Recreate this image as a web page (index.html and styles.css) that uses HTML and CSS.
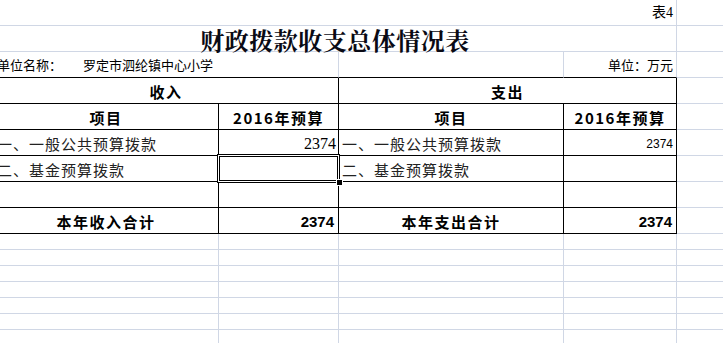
FILE: index.html
```html
<!DOCTYPE html>
<html lang="zh-CN">
<head>
<meta charset="utf-8">
<title>财政拨款收支总体情况表</title>
<link rel="stylesheet" href="styles.css">
</head>
<body>
<div class="sheet">
  <div class="cell span4 right no"><span>表4</span></div>
  <div class="cell"></div>

  <div class="cell span4 center title">财政拨款收支总体情况表</div>
  <div class="cell"></div>

  <div class="cell span2 bb unit"><span class="lbl">单位名称：</span><span>罗定市泗纶镇中心小学</span></div>
  <div class="cell bb"></div>
  <div class="cell bb right unit">单位：万元</div>
  <div class="cell"></div>

  <div class="cell span2 k center hd">收入</div>
  <div class="cell span2 k center hd">支出</div>
  <div class="cell"></div>

  <div class="cell k center hd">项目</div>
  <div class="cell k center hd">2016年预算</div>
  <div class="cell k center hd">项目</div>
  <div class="cell k center hd">2016年预算</div>
  <div class="cell"></div>

  <div class="cell k txt">一、一般公共预算拨款</div>
  <div class="cell k right num-serif">2374</div>
  <div class="cell k txt">一、一般公共预算拨款</div>
  <div class="cell k right num-sans">2374</div>
  <div class="cell"></div>

  <div class="cell k txt">二、基金预算拨款</div>
  <div class="cell k selected"><span class="sel"><span class="handle"></span></span></div>
  <div class="cell k txt">二、基金预算拨款</div>
  <div class="cell k"></div>
  <div class="cell"></div>

  <div class="cell k"></div>
  <div class="cell k"></div>
  <div class="cell k"></div>
  <div class="cell k"></div>
  <div class="cell"></div>

  <div class="cell k center hd">本年收入合计</div>
  <div class="cell k right num-bold">2374</div>
  <div class="cell k center hd">本年支出合计</div>
  <div class="cell k right num-bold">2374</div>
  <div class="cell"></div>

  <div class="cell"></div><div class="cell"></div><div class="cell"></div><div class="cell"></div><div class="cell"></div>
  <div class="cell"></div><div class="cell"></div><div class="cell"></div><div class="cell"></div><div class="cell"></div>
  <div class="cell"></div><div class="cell"></div><div class="cell"></div><div class="cell"></div><div class="cell"></div>
  <div class="cell"></div><div class="cell"></div><div class="cell"></div><div class="cell"></div><div class="cell"></div>
  <div class="cell"></div><div class="cell"></div><div class="cell"></div><div class="cell"></div><div class="cell"></div>
  <div class="cell"></div><div class="cell"></div><div class="cell"></div><div class="cell"></div><div class="cell"></div>
  <div class="cell"></div><div class="cell"></div><div class="cell"></div><div class="cell"></div><div class="cell"></div>
</div>
</body>
</html>
```

FILE: styles.css
```css
html, body {
  margin: 0;
  padding: 0;
  background: #fff;
}
body {
  width: 723px;
  height: 343px;
  overflow: hidden;
  font-family: "Noto Sans CJK SC", "Liberation Sans", sans-serif;
  color: #000;
}
.sheet {
  display: grid;
  grid-template-columns: 225px 120px 225px 113px 80px;
  grid-template-rows: repeat(9, 26px) repeat(7, 16px);
  margin-left: -6px;
  width: 763px;
}
.cell {
  box-sizing: border-box;
  border-right: 1px solid #d0d7e5;
  border-bottom: 1px solid #d0d7e5;
  display: flex;
  align-items: center;
  padding: 2px 3px 0 3px;
  white-space: nowrap;
  min-width: 0;
  font-size: 15px;
  line-height: 1.2;
}
.span2 { grid-column: span 2; }
.span4 { grid-column: span 4; }
.k { border-right-color: #000; border-bottom-color: #000; }
.bb { border-bottom-color: #000; }
.center { justify-content: center; }
.right { justify-content: flex-end; }

.no {
  font-family: "Liberation Serif", "Noto Sans CJK SC", serif;
  font-size: 14px;
  padding-top: 1px;
}
.title {
  font-family: "Noto Serif CJK SC", "Noto Sans CJK SC", serif;
  font-size: 24px;
  font-weight: 700;
  letter-spacing: 0.5px;
  padding-top: 3px;
  line-height: 1;
  color: #0a0a14;
}
.unit {
  font-size: 13px;
  padding-top: 1px;
}
.lbl {
  display: inline-block;
  width: 86px;
}
.hd {
  font-weight: 700;
  font-size: 15px;
  letter-spacing: 1.5px;
  padding-top: 3px;
}
.txt {
  font-size: 15px;
  letter-spacing: 1px;
  color: #222;
  padding-top: 3px;
}
.num-serif {
  font-family: "Liberation Serif", serif;
  font-size: 16px;
  padding-right: 2px;
  padding-top: 3px;
}
.num-sans {
  font-family: "Liberation Sans", sans-serif;
  font-size: 12px;
  padding-top: 3px;
}
.num-bold {
  font-family: "Liberation Sans", sans-serif;
  font-size: 15px;
  font-weight: 700;
  padding-top: 3px;
  padding-right: 4px;
}
.selected {
  position: relative;
}
.sel {
  position: absolute;
  left: -2px;
  top: -2px;
  width: 123px;
  height: 29px;
  box-sizing: border-box;
  border: 1px solid #000;
  box-shadow: inset 0 0 0 1px #fff, inset 0 0 0 2px #000;
}
.handle {
  position: absolute;
  right: -4px;
  bottom: -4px;
  width: 5px;
  height: 5px;
  background: #000;
  border: 1px solid #fff;
}
```
